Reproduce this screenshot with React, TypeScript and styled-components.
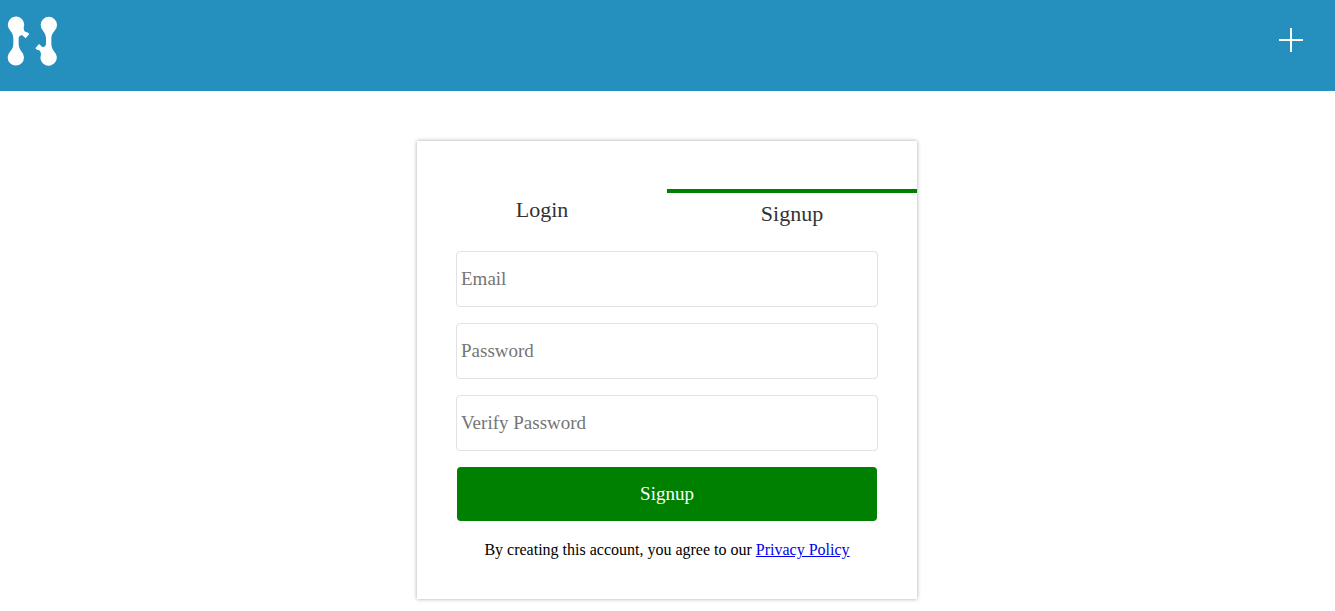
import React from "react";
import styled, { createGlobalStyle } from "styled-components";

const GlobalStyle = createGlobalStyle`
  *, *::before, *::after {
    box-sizing: border-box;
  }
  body {
    margin: 0;
    background: #fff;
    color: #000;
    font-family: "Liberation Serif", "Times New Roman", serif;
    font-size: 16px;
  }
`;

const Header = styled.header`
  display: flex;
  align-items: flex-start;
  justify-content: space-between;
  padding: 16px 32px 25px 7px;
  background: #258fbd;
`;

const LogoLink = styled.a`
  display: block;
  height: 50px;
`;

const MenuButton = styled.button`
  margin: 12px 0 0;
  padding: 0;
  border: 0;
  background: none;
  line-height: 0;
  cursor: pointer;
`;

const Main = styled.main`
  display: flex;
  justify-content: center;
  padding: 50px 1px 12px 0;
`;

const Card = styled.section`
  width: 100%;
  max-width: 500px;
  padding: 48px 0 40px;
  background: #fff;
  box-shadow: 0 0 4px rgba(0, 0, 0, 0.35);
`;

const Tabs = styled.div`
  display: flex;
  align-items: flex-start;
  height: 62px;
`;

const Tab = styled.button<{ $active?: boolean }>`
  flex: 1;
  padding: 8px 0;
  border: 0;
  border-top: ${(p) => (p.$active ? "4px solid #008000" : "0")};
  background: none;
  color: #333;
  font-family: inherit;
  font-size: 22px;
  line-height: 26px;
  cursor: pointer;
`;

const Form = styled.form`
  display: flex;
  flex-direction: column;
  gap: 16px;
  padding: 0 39px;
`;

const Field = styled.input`
  width: 100%;
  height: 56px;
  padding: 0 4px;
  border: 1px solid #e2e2e2;
  border-radius: 4px;
  background: #fff;
  font-family: inherit;
  font-size: 19px;

  &::placeholder {
    color: #757575;
  }
`;

const Submit = styled.button`
  height: 54px;
  margin: 0 1px;
  padding: 0;
  border: 0;
  border-radius: 4px;
  background: #008000;
  color: #fff;
  font-family: inherit;
  font-size: 19px;
  cursor: pointer;
`;

const Terms = styled.p`
  margin: 4px 0 0;
  font-size: 16px;
  line-height: 18px;
  text-align: center;
`;

const PolicyLink = styled.a`
  color: #0000ee;
`;

const logoHalf =
  "M40 94 C40 82 37 75 31 68 A24.500 24.500 0 1 1 71 59 C71 65 73 70 78 73 L82 73 L88 78 L77 91 L70 85 L69 83 C63 80 57 84 56 90 L56 108 C56 118 60 124 65 131 A24.500 24.500 0 1 1 30 131 C36 124 40 118 40 108 Z";

function Logo() {
  return (
    <svg width="50" height="50" viewBox="21 24 150 150" fill="#fff" aria-hidden="true">
      <path d={logoHalf} />
      <path d={logoHalf} transform="rotate(180 97 99.5)" />
    </svg>
  );
}

function Plus() {
  return (
    <svg width="24" height="24" viewBox="0 0 24 24" stroke="#fff" strokeWidth="2" aria-hidden="true">
      <path d="M0 12H24M12 0V24" />
    </svg>
  );
}

const fields = [
  { name: "email", type: "email", label: "Email" },
  { name: "password", type: "password", label: "Password" },
  { name: "verify", type: "password", label: "Verify Password" },
];

export default function App() {
  return (
    <>
      <GlobalStyle />
      <Header>
        <LogoLink href="#" aria-label="Home">
          <Logo />
        </LogoLink>
        <MenuButton type="button" aria-label="Open menu">
          <Plus />
        </MenuButton>
      </Header>
      <Main>
        <Card>
          <Tabs role="tablist">
            <Tab type="button" role="tab" aria-selected={false}>
              Login
            </Tab>
            <Tab type="button" role="tab" aria-selected $active>
              Signup
            </Tab>
          </Tabs>
          <Form onSubmit={(e) => e.preventDefault()}>
            {fields.map((f) => (
              <Field
                key={f.name}
                name={f.name}
                type={f.type}
                placeholder={f.label}
                aria-label={f.label}
              />
            ))}
            <Submit type="submit">Signup</Submit>
            <Terms>
              By creating this account, you agree to our{" "}
              <PolicyLink href="#privacy">Privacy Policy</PolicyLink>
            </Terms>
          </Form>
        </Card>
      </Main>
    </>
  );
}
